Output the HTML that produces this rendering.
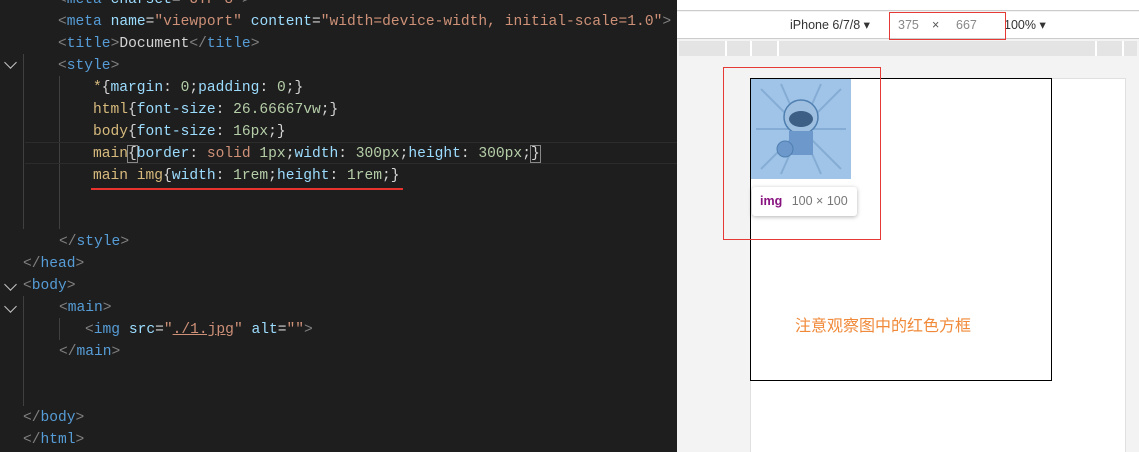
<!DOCTYPE html>
<html><head><meta charset="utf-8"><style>
*{margin:0;padding:0;box-sizing:border-box}
html,body{width:1139px;height:452px;overflow:hidden}
body{position:relative;background:#1e1e1e;font-family:"Liberation Sans","Noto Sans CJK SC",sans-serif}
#ed{position:absolute;left:0;top:0;width:677px;height:452px;background:#1e1e1e;font-family:"Liberation Mono",monospace;font-size:14.6px;color:#d4d4d4;overflow:hidden}
.l{position:absolute;white-space:pre;height:22px;line-height:22px}
.g{color:#808080}.t{color:#569cd6}.a{color:#9cdcfe}.s{color:#ce9178}.sel{color:#d7ba7d}.n{color:#b5cea8}
.chev{position:absolute;left:6px;width:9px;height:9px;border-right:1.5px solid #c5c5c5;border-bottom:1.5px solid #c5c5c5;transform:rotate(45deg)}
.guide{position:absolute;width:1px;background:#404040}
#rp{position:absolute;left:677px;top:0;width:462px;height:452px;background:#f3f3f3;overflow:hidden}
</style></head><body>
<div id="ed">
<div class="guide" style="left:23px;top:54px;height:175px"></div>
<div class="guide" style="left:59px;top:76px;height:153px"></div>
<div class="guide" style="left:23px;top:296px;height:110px"></div>
<div class="guide" style="left:59px;top:318px;height:22px"></div>
<div style="position:absolute;left:25px;top:142px;width:652px;height:22px;border-top:1px solid #2c2c2c;border-bottom:1px solid #2c2c2c"></div>
<div class="l" style="left:58px;top:-11px"><span class="g">&lt;</span><span class="t">meta</span> <span class="a">charset</span>=<span class="s">"UTF-8"</span><span class="g">&gt;</span></div>
<div class="l" style="left:58px;top:11px"><span class="g">&lt;</span><span class="t">meta</span> <span class="a">name</span>=<span class="s">"viewport"</span> <span class="a">content</span>=<span class="s">"width=device-width, initial-scale=1.0"</span><span class="g">&gt;</span></div>
<div class="l" style="left:58px;top:33px"><span class="g">&lt;</span><span class="t">title</span><span class="g">&gt;</span>Document<span class="g">&lt;/</span><span class="t">title</span><span class="g">&gt;</span></div>
<div class="chev" style="top:58px"></div>
<div class="l" style="left:58px;top:55px"><span class="g">&lt;</span><span class="t">style</span><span class="g">&gt;</span></div>
<div class="l" style="left:93px;top:77px"><span class="sel">*</span>{<span class="a">margin</span>: <span class="n">0</span>;<span class="a">padding</span>: <span class="n">0</span>;}</div>
<div class="l" style="left:93px;top:99px"><span class="sel">html</span>{<span class="a">font-size</span>: <span class="n">26.66667vw</span>;}</div>
<div class="l" style="left:93px;top:121px"><span class="sel">body</span>{<span class="a">font-size</span>: <span class="n">16px</span>;}</div>
<div class="l" style="left:93px;top:143px"><span class="sel">main</span><span style="outline:1px solid #888">{</span><span class="a">border</span>: <span class="s">solid</span> <span class="n">1px</span>;<span class="a">width</span>: <span class="n">300px</span>;<span class="a">height</span>: <span class="n">300px</span>;<span style="outline:1px solid #888">}</span></div>
<div class="l" style="left:93px;top:165px"><span class="sel">main img</span>{<span class="a">width</span>: <span class="n">1rem</span>;<span class="a">height</span>: <span class="n">1rem</span>;}</div>
<div style="position:absolute;left:91px;top:188px;width:312px;height:2px;background:#e8322e"></div>
<div class="l" style="left:59px;top:231px"><span class="g">&lt;/</span><span class="t">style</span><span class="g">&gt;</span></div>
<div class="l" style="left:23px;top:253px"><span class="g">&lt;/</span><span class="t">head</span><span class="g">&gt;</span></div>
<div class="chev" style="top:280px"></div>
<div class="l" style="left:23px;top:275px"><span class="g">&lt;</span><span class="t">body</span><span class="g">&gt;</span></div>
<div class="chev" style="top:302px"></div>
<div class="l" style="left:59px;top:297px"><span class="g">&lt;</span><span class="t">main</span><span class="g">&gt;</span></div>
<div class="l" style="left:85px;top:319px"><span class="g">&lt;</span><span class="t">img</span> <span class="a">src</span>=<span class="s">"<span style="text-decoration:underline">./1.jpg</span>"</span> <span class="a">alt</span>=<span class="s">""</span><span class="g">&gt;</span></div>
<div class="l" style="left:59px;top:341px"><span class="g">&lt;/</span><span class="t">main</span><span class="g">&gt;</span></div>
<div class="l" style="left:23px;top:407px"><span class="g">&lt;/</span><span class="t">body</span><span class="g">&gt;</span></div>
<div class="l" style="left:23px;top:429px"><span class="g">&lt;/</span><span class="t">html</span><span class="g">&gt;</span></div>
</div>
<div id="rp">
<div style="position:absolute;left:0;top:0;width:462px;height:11px;background:#fff;border-bottom:1px solid #ccc"></div>
<div style="position:absolute;left:0;top:12px;width:462px;height:27px;background:#fff;border-bottom:1px solid #ccc;font-size:12.5px;color:#333">
<span style="position:absolute;left:113px;top:5px">iPhone 6/7/8 ▾</span>
<span style="position:absolute;left:221px;top:6px;color:#888">375</span>
<span style="position:absolute;left:255px;top:6px;color:#555">×</span>
<span style="position:absolute;left:279px;top:6px;color:#888">667</span>
<span style="position:absolute;left:327px;top:5px">100% ▾</span>
<div style="position:absolute;left:212px;top:0;width:117px;height:28px;border:1.5px solid #e53935"></div>
</div>
<div style="position:absolute;left:2px;top:41px;width:458px;height:15px;background:#e4e4e4"></div>
<div style="position:absolute;left:48px;top:41px;width:2px;height:15px;background:#fff"></div>
<div style="position:absolute;left:73px;top:41px;width:2px;height:15px;background:#fff"></div>
<div style="position:absolute;left:100px;top:41px;width:2px;height:15px;background:#fff"></div>
<div style="position:absolute;left:418px;top:41px;width:2px;height:15px;background:#fff"></div>
<div style="position:absolute;left:445px;top:41px;width:2px;height:15px;background:#fff"></div>
<div style="position:absolute;left:73px;top:78px;width:376px;height:380px;background:#fff;border:1px solid #e0e0e0"></div>
<div style="position:absolute;left:73px;top:78px;width:302px;height:303px;border:1px solid #000"></div>
<div style="position:absolute;left:74px;top:79px;width:100px;height:100px;background:#a0c4e8">
<svg width="100" height="100" viewBox="0 0 100 100"><g stroke="#7aa3cc" stroke-width="2" opacity=".7"><path d="M50 50L10 10M50 50L90 10M50 50L5 50M50 50L95 50M50 50L10 90M50 50L90 90M50 50L30 5M50 50L70 5M50 50L30 95M50 50L70 95"/></g><circle cx="50" cy="38" r="17" fill="#9ebfe0" stroke="#4f7fb0" stroke-width="1.5"/><ellipse cx="50" cy="40" rx="12" ry="8" fill="#3d5f86"/><rect x="38" y="52" width="24" height="24" fill="#6c98cc"/><circle cx="34" cy="70" r="8" fill="#6c98cc" stroke="#4f7fb0"/></svg></div>
<div style="position:absolute;left:75px;top:187px;width:105px;height:29px;background:#fff;border-radius:3px;box-shadow:0 1px 4px rgba(0,0,0,.3);font-size:12.5px;line-height:29px;padding-left:8px"><b style="color:#881280">img</b> <span style="color:#777;margin-left:6px">100 × 100</span></div>
<div style="position:absolute;left:46px;top:67px;width:158px;height:173px;border:1.5px solid #e53935"></div>
<div style="position:absolute;left:118px;top:312px;font-size:16px;color:#f08a3a;font-family:'Noto Sans CJK SC',sans-serif">注意观察图中的红色方框</div>
</div>
</body></html>
